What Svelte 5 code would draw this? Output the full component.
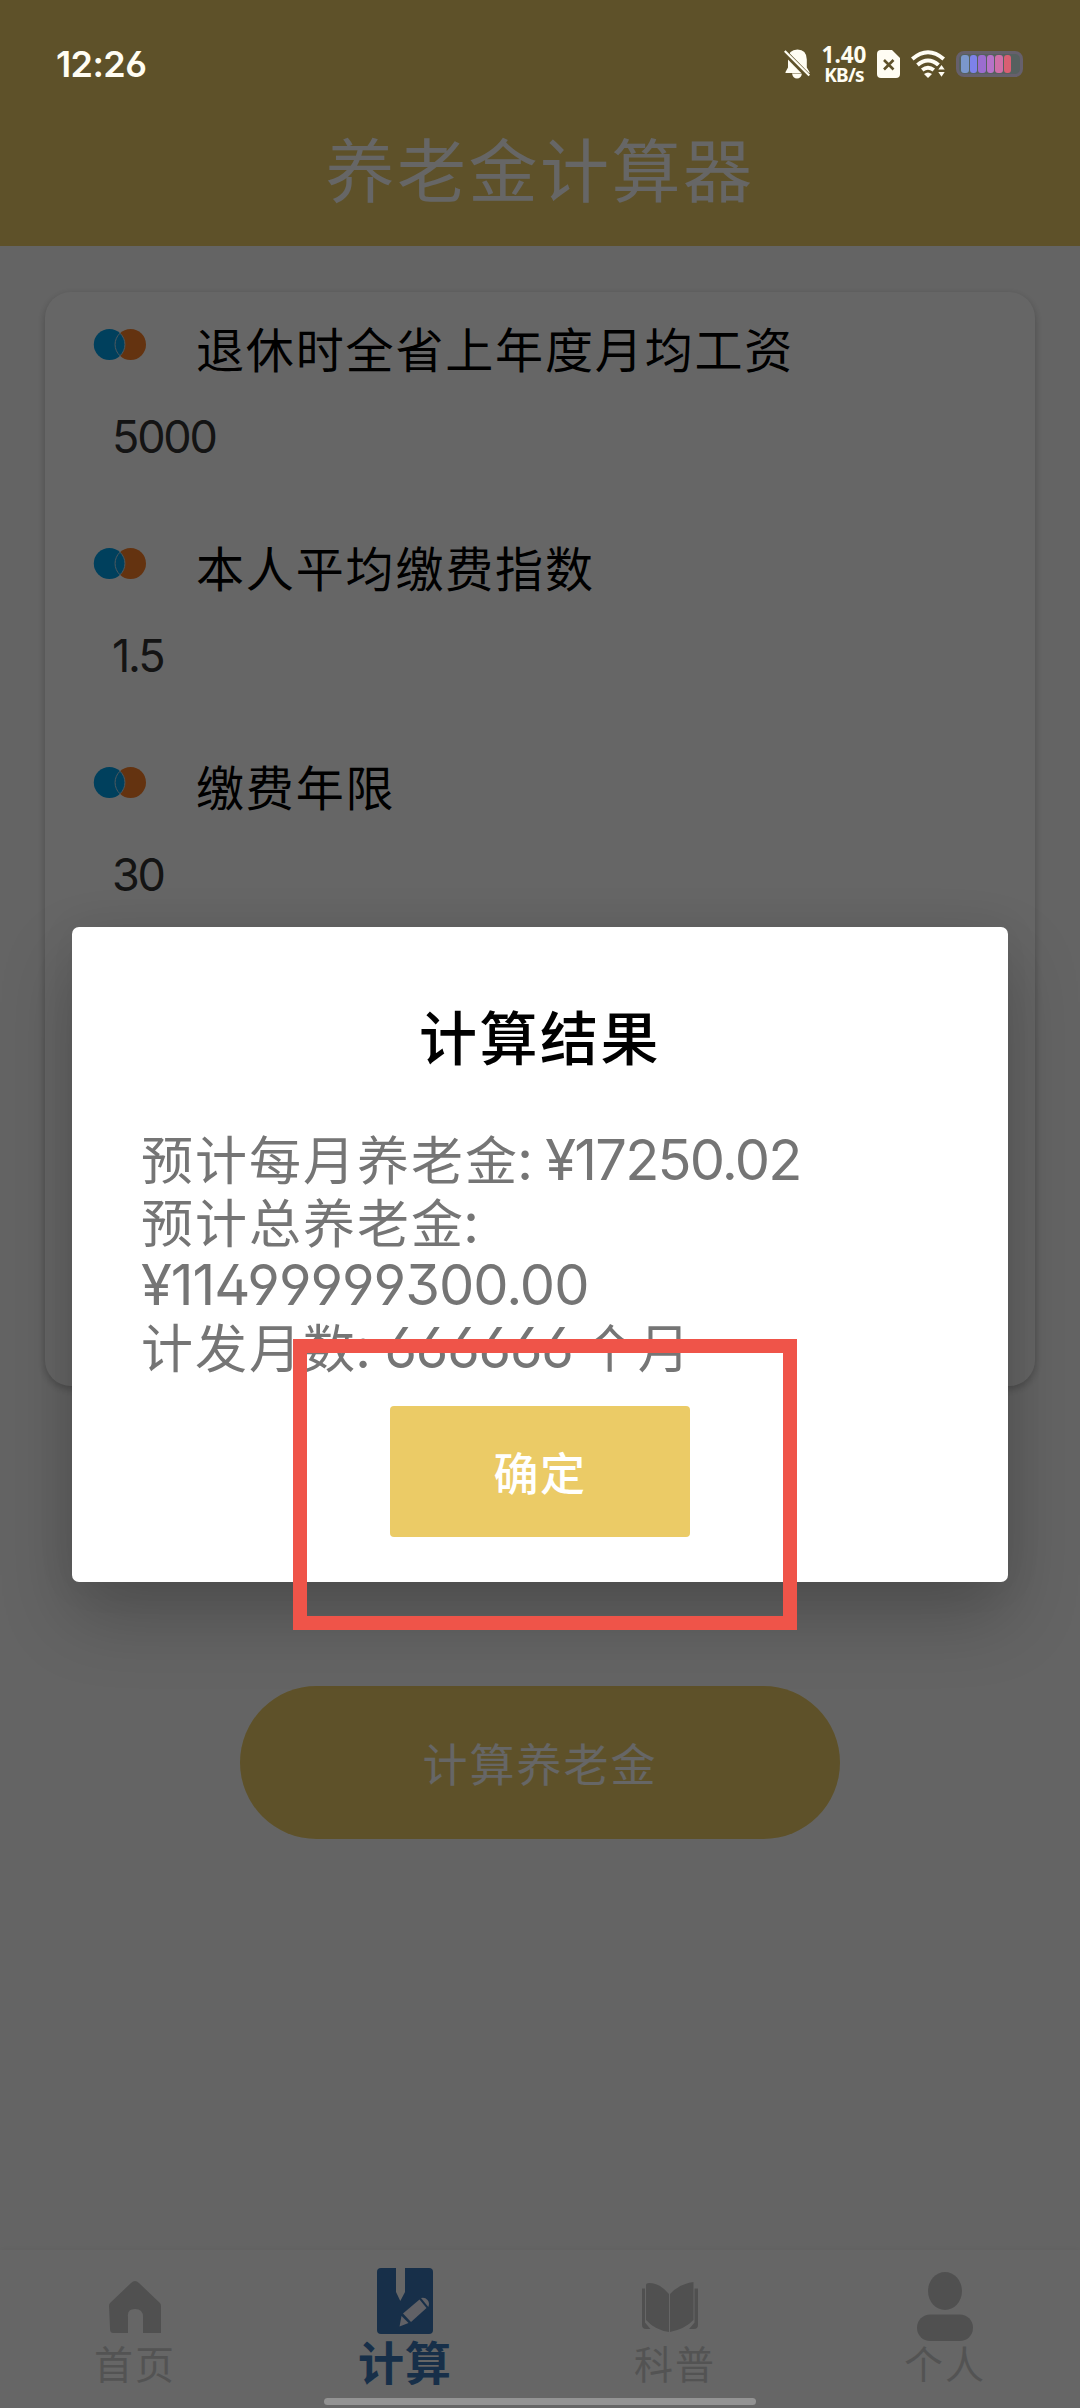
<script lang="ts">
	interface Field {
		label: string;
		value: string;
	}

	const fields: Field[] = [
		{ label: "退休时全省上年度月均工资", value: "5000" },
		{ label: "本人平均缴费指数", value: "1.5" },
		{ label: "缴费年限", value: "30" }
	];

	const tabs = [
		{ id: "home", label: "首页" },
		{ id: "calc", label: "计算" },
		{ id: "learn", label: "科普" },
		{ id: "me", label: "个人" }
	];

	const batteryCells = ["#7b97cc", "#7d82ea", "#9b6dcf", "#b673c9", "#cf6fa8", "#d95f72"];

	let activeTab = $state("calc");
	let isDialogOpen = $state(true);

	function closeDialog() {
		isDialogOpen = false;
	}

	function openDialog() {
		isDialogOpen = true;
	}
</script>

<div class="screen">
	<header class="header">
		<h1>养老金计算器</h1>
	</header>

	<main class="content">
		<section class="card">
			{#each fields as field}
				<div class="field">
					<div class="field-head">
						<svg class="dots" width="54" height="33" viewBox="0 0 54 33">
							<circle cx="37.6" cy="16.5" r="15.4" fill="#f97f28" />
							<circle cx="16.4" cy="16.5" r="15.6" fill="#00a0e9" />
							<path d="M27 5.2a15.4 15.4 0 0 0 0 22.6a15.4 15.4 0 0 0 0-22.6z" fill="none" stroke="#c3dbe8" stroke-width="1" />
						</svg>
						<span class="field-label">{field.label}</span>
					</div>
					<div class="field-value">{field.value}</div>
				</div>
			{/each}
		</section>

		<button class="calc-button" onclick={openDialog}>计算养老金</button>
	</main>

	<nav class="tabbar">
		{#each tabs as tab}
			<button class="tab" class:active={activeTab === tab.id} onclick={() => (activeTab = tab.id)}>
				{#if tab.id === "home"}
					<svg class="icon-home" width="52" height="53" viewBox="0 0 52 53">
						<path d="M26 0q2 0 4 2l21 20q1 1 1 3v27H34V36q0-8-8-8t-7 8v16H4q-3 0-3-4L0 25q0-2 1-3L22 2q2-2 4-2z" fill="currentColor" />
					</svg>
				{:else if tab.id === "calc"}
					<svg class="icon-calc" width="56" height="66" viewBox="0 0 56 66">
						<rect width="56" height="66" rx="4" fill="currentColor" />
						<path d="M19 0h9v24l-4.700 9L19 24z" fill="#fff" />
						<g fill="#f2f2ff">
							<path d="M42.500 31.500l7 8.500L34 54l-8-8.500z" />
							<path d="M44 30q4-1 6.500 2t.8 7z" />
							<path d="M24.500 48l7 7-9 3.500z" />
						</g>
					</svg>
				{:else if tab.id === "learn"}
					<svg class="icon-learn" width="56" height="50" viewBox="0 0 56 50">
						<path d="M0 6.500h3v34l5.500 6.500H4q-4 0-4-4zM56 6.500h-3.500v34L47 47h5q4 0 4-4z" fill="currentColor" />
						<path d="M4 3q0-2 3-2 11 0 20 11v38Q13 48 4 38zM51.500 0Q37 2 28 12v38Q43 47 51.500 38z" fill="currentColor" />
					</svg>
				{:else}
					<svg class="icon-me" width="56" height="69" viewBox="0 0 56 69">
						<ellipse cx="28" cy="19" rx="17" ry="19" fill="currentColor" />
						<rect y="42.500" width="56" height="26.500" rx="13" fill="currentColor" />
					</svg>
				{/if}
				<span>{tab.label}</span>
			</button>
		{/each}
	</nav>

	{#if isDialogOpen}
		<div class="overlay">
			<div class="dialog" role="dialog">
				<h2>计算结果</h2>
				<div class="result">
					<p>预计每月养老金<span class="num">: ¥17250.02</span></p>
					<p>预计总养老金<span class="num">:</span></p>
					<p><span class="num total">¥11499999300.00</span></p>
					<p>计发月数<span class="num months">: 666666 </span>个月</p>
				</div>
				<button class="confirm" onclick={closeDialog}>确定</button>
				<div class="marker"></div>
			</div>
		</div>
	{/if}

	<!-- System bar, stays above the dimmed page -->
	<div class="statusbar">
		<span class="clock">12:26</span>
		<div class="status-icons">
			<svg class="bell" width="27" height="30" viewBox="0 0 27 30">
				<path d="M13.500 0.500q9 0 9.300 10v8l2.700 4.500v1H1.500v-1L4 18.500v-8q.3-10 9.500-10zM8 24.500h10q-1 5-5 5t-5-5z" fill="#fffdf3" />
				<path d="M-1 1.500L25.500 28.500" stroke="#5e5129" stroke-width="5.500" />
				<path d="M0.800 2L25.300 26.500" stroke="#fffdf3" stroke-width="2.200" />
			</svg>
			<div class="speed">
				<span class="rate">1.40</span>
				<span class="unit">KB/s</span>
			</div>
			<svg class="sim" width="23" height="28" viewBox="0 0 23 28">
				<path d="M4 0h11l8 8v16q0 4-4 4H4q-4 0-4-4V4q0-4 4-4z" fill="#fffdf3" />
				<path d="M7 10l9.500 9.500M16.500 10L7 19.500" stroke="#5e5129" stroke-width="2.600" />
			</svg>
			<svg class="wifi" width="35" height="28" viewBox="0 0 35 28">
				<g fill="none" stroke="#fffdf3" stroke-width="4">
					<path d="M1.300 9q15.700-13.500 31.400 0" />
					<path d="M6.500 15q10.500-9 21 0" />
					<path d="M11.200 20q5.800-4.500 11.600 0" />
				</g>
				<path d="M13 24q4-3 8 0l-4 4z" fill="#fffdf3" />
				<circle cx="30.500" cy="20.500" r="6" fill="#5e5129" />
				<path d="M27.300 19.500l3.200-4.500 3.200 4.500zM27.300 22l3.200 4.800 3.200-4.800z" fill="#fffdf3" />
			</svg>
			<div class="battery">
				{#each batteryCells as color}
					<i style="background: {color}"></i>
				{/each}
			</div>
		</div>
	</div>
	<div class="home-indicator"></div>
</div>

<style>
	:global(body) {
		margin: 0;
	}

	.screen {
		position: relative;
		width: 1080px;
		height: 2408px;
		display: flex;
		flex-direction: column;
		overflow: hidden;
		background: #fbfbfb;
		font-family: "Noto Sans CJK SC", sans-serif;
	}

	button {
		border: none;
		padding: 0;
		font-family: inherit;
	}

	h1,
	h2,
	p {
		margin: 0;
		font-weight: 400;
	}

	.header {
		height: 246px;
		box-sizing: border-box;
		padding-top: 117px;
		background: #ebcb66;
		text-align: center;
	}

	.header h1 {
		font-size: 69px;
		line-height: 100px;
		letter-spacing: 2.500px;
		color: #fff;
	}

	.content {
		flex: 1;
		display: flex;
		flex-direction: column;
		align-items: center;
		padding-top: 46px;
	}

	.card {
		width: 990px;
		height: 1094px;
		box-sizing: border-box;
		padding-top: 25px;
		border-radius: 26px;
		background: #fff;
		box-shadow: 0 3px 8px rgba(0, 0, 0, 0.25);
	}

	.field {
		height: 219px;
		padding-left: 48px;
	}

	.field-head {
		display: flex;
		align-items: flex-start;
		height: 60px;
	}

	.dots {
		margin-top: 11px;
	}

	.field-label {
		margin-left: 49px;
		font-size: 48px;
		line-height: 60px;
		letter-spacing: 1.850px;
		color: #000;
	}

	.field-value {
		margin: 30px 0 0 19px;
		font-family: Inter, sans-serif;
		font-size: 45px;
		line-height: 60px;
		letter-spacing: -2.200px;
		color: #333;
	}

	.calc-button {
		width: 600px;
		height: 153px;
		margin-top: 300px;
		border-radius: 77px;
		background: #ebcb66;
		color: #fff;
		font-size: 45px;
		letter-spacing: 2px;
	}

	.tabbar {
		display: flex;
		height: 158px;
		background: #fff;
		box-shadow: 0 -2px 6px rgba(0, 0, 0, 0.04);
	}

	.tab {
		flex: 1;
		display: flex;
		flex-direction: column;
		align-items: center;
		background: none;
		color: #c9c9c9;
		font-size: 39px;
		line-height: 50px;
		letter-spacing: 2px;
	}

	.tab span {
		color: #d0d0d0;
	}

	.tab.active,
	.tab.active span {
		color: #3a76b6;
	}

	.tab.active span {
		font-size: 46px;
		font-weight: 700;
		letter-spacing: 1px;
	}

	.icon-home {
		margin: 31px 0 3px;
	}

	.icon-calc {
		margin: 18px 0 1px;
	}

	.icon-learn {
		margin: 32px 10px 5px 0;
	}

	.icon-me {
		margin: 22px 0 -4px;
	}

	.overlay {
		position: absolute;
		inset: 0;
		display: flex;
		justify-content: center;
		align-items: flex-start;
		box-sizing: border-box;
		padding-top: 927px;
		background: rgba(0, 0, 0, 0.6);
	}

	.dialog {
		position: relative;
		display: flex;
		flex-direction: column;
		align-items: center;
		width: 936px;
		height: 655px;
		box-sizing: border-box;
		padding-top: 66px;
		border-radius: 7px;
		background: #fff;
		box-shadow: 0 34px 72px rgba(0, 0, 0, 0.22), 0 2px 40px rgba(0, 0, 0, 0.06);
	}

	.dialog h2 {
		font-size: 58px;
		font-weight: 500;
		line-height: 84px;
		letter-spacing: 2.500px;
		color: #000;
	}

	.result {
		align-self: stretch;
		margin-top: 50px;
		padding-left: 69px;
		font-size: 52px;
		letter-spacing: 2px;
		color: #757575;
	}

	.result p {
		height: 62.700px;
		line-height: 62.700px;
		white-space: pre;
	}

	.num {
		font-family: Inter, sans-serif;
		font-size: 56px;
		letter-spacing: -1.800px;
		margin-left: -2px;
		font-feature-settings: "ss01";
	}

	.num.total {
		margin-left: 0;
		letter-spacing: -1px;
	}

	.num.months {
		letter-spacing: -1.200px;
		margin-right: 11px;
	}

	.confirm {
		width: 300px;
		height: 131px;
		margin-top: 28px;
		border-radius: 4px;
		background: #ebcb66;
		color: #fff;
		font-size: 45px;
		font-weight: 500;
		letter-spacing: 1.500px;
	}

	/* Highlight frame around the confirm button */
	.marker {
		position: absolute;
		left: 221px;
		top: 412px;
		width: 504px;
		height: 291px;
		box-sizing: border-box;
		border: 14px solid #ef5449;
	}

	.statusbar {
		position: absolute;
		top: 44px;
		left: 0;
		right: 0;
		height: 40px;
		display: flex;
		justify-content: space-between;
		align-items: center;
		padding: 0 57px 0 56px;
		color: #fffdf3;
	}

	.clock {
		font-family: Inter, sans-serif;
		font-size: 36px;
		font-weight: 600;
		line-height: 40px;
		letter-spacing: -0.600px;
		font-feature-settings: "ss01";
	}

	.status-icons {
		display: flex;
		align-items: center;
	}

	.speed {
		display: flex;
		flex-direction: column;
		align-items: center;
		width: 46px;
		margin: 2px 10px 0 10px;
		font-family: "Noto Sans", sans-serif;
		font-weight: 700;
	}

	.rate {
		font-size: 22.500px;
		line-height: 20px;
	}

	.unit {
		font-size: 19px;
		line-height: 20px;
		letter-spacing: -0.800px;
	}

	.wifi {
		margin: 0 10px 0 11px;
	}

	.battery {
		display: flex;
		gap: 1px;
		width: 67px;
		height: 26px;
		box-sizing: border-box;
		padding: 1px 2px;
		border: 3px solid #66606c;
		border-radius: 8px;
		background: #56605f;
	}

	.battery i {
		width: 7.500px;
		border-radius: 3px;
	}

	.home-indicator {
		position: absolute;
		left: 324px;
		bottom: 3px;
		width: 432px;
		height: 7px;
		border-radius: 4px;
		background: #939393;
	}
</style>
